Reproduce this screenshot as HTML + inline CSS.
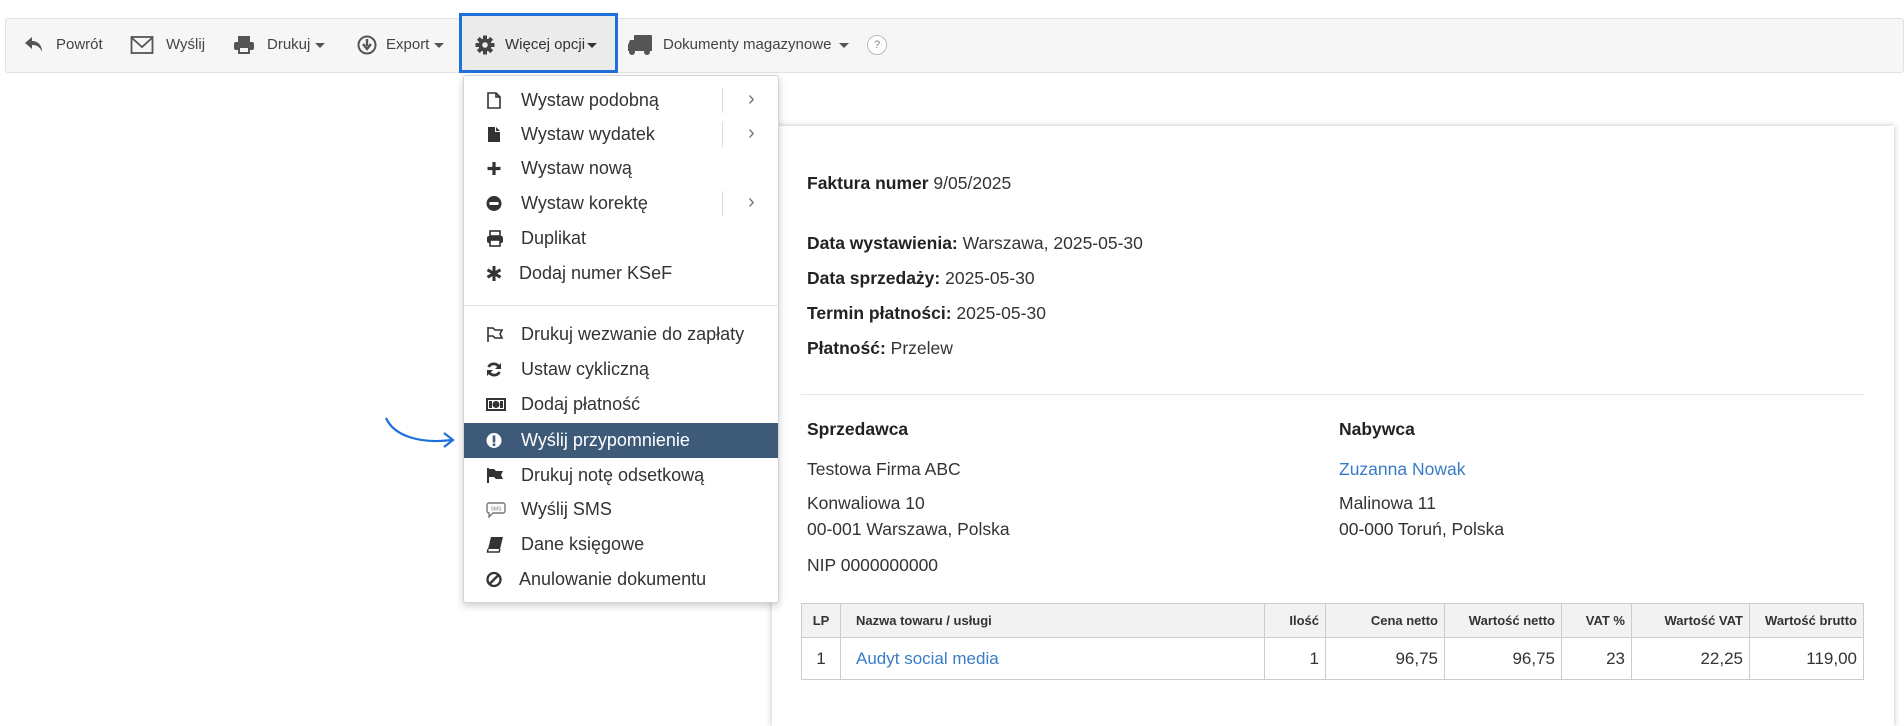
<!DOCTYPE html>
<html><head><meta charset="utf-8"><style>
*{margin:0;padding:0;box-sizing:border-box}
body{width:1904px;height:677px;overflow:hidden;background:#fff;font-family:"Liberation Sans",Arial,sans-serif;color:#333;position:relative}
.a{position:absolute;white-space:nowrap}
.tb{position:absolute;left:5px;top:18px;width:1899px;height:55px;background:#f6f6f6;border:1px solid #e2e2e2;border-radius:3px}
.tt{position:absolute;top:36px;font-size:15px;color:#444;line-height:18px}
.car{display:inline-block;width:0;height:0;border-left:5px solid transparent;border-right:5px solid transparent;border-top:5px solid #555;vertical-align:middle;margin-left:5px}
.menu{position:absolute;z-index:5;left:463px;top:75px;width:316px;height:528px;background:#fff;border:1px solid #d5d5d5;border-radius:3px;box-shadow:0 3px 8px rgba(0,0,0,.2)}
.mi{position:absolute;left:0;width:314px;height:35px;font-size:18px;color:#333;line-height:35px}
.mi span{position:absolute;left:57px}
.mi svg{position:absolute;left:22px;top:9px}
.vs{position:absolute;left:258px;top:5px;width:1px;height:25px;background:#ddd}
.chev{position:absolute;left:284px;top:-1px;color:#777;font-size:20px}
.hl{background:#3d5a78;color:#fff}
.panel{position:absolute;left:772px;top:126px;width:1122px;height:600px;background:#fff;box-shadow:0 0 6px rgba(0,0,0,.25)}
.t{font-size:17.5px;color:#333}
b{font-weight:bold;color:#222}
table{position:absolute;left:801px;top:603px;border-collapse:collapse;width:1063px}
td,th{border:1px solid #ccc;padding:0 6px}
th{background:#f2f2f2;font-size:13px;height:34px;text-align:right;color:#333}
td{height:42px;font-size:17px;text-align:right}
</style></head><body>
<div class="tb"></div>
<div style="position:absolute;left:459px;top:13px;width:159px;height:60px;border:3px solid #1f6fdc;background:#ebebeb"></div>

<svg class="a" style="left:24px;top:36px" width="20" height="18" viewBox="0 0 20 18"><path d="M8 1 L1 7 L8 13 V9 C13 9 16 11 18 16 C18 9 14 5 8 5 Z" fill="#555"/></svg>
<div class="tt" style="left:56px">Powrót</div>
<svg class="a" style="left:130px;top:35px" width="24" height="20" viewBox="0 0 24 20"><rect x="1.5" y="2" width="21" height="16" fill="none" stroke="#555" stroke-width="1.8"/><path d="M2 3 L12 12 L22 3" fill="none" stroke="#555" stroke-width="1.8"/></svg>
<div class="tt" style="left:166px">Wyślij</div>
<svg class="a" style="left:233px;top:35px" width="22" height="20" viewBox="0 0 22 20"><rect x="5" y="1" width="12" height="6" fill="#555"/><rect x="1" y="7" width="20" height="8" rx="2" fill="#555"/><rect x="5" y="12" width="12" height="7" fill="#555"/><rect x="7" y="13" width="8" height="4" fill="#f6f6f6"/></svg>
<div class="tt" style="left:267px">Drukuj<span class="car"></span></div>
<svg class="a" style="left:357px;top:35px" width="20" height="20" viewBox="0 0 20 20"><circle cx="10" cy="10" r="8.5" fill="none" stroke="#555" stroke-width="2"/><path d="M10 4 V11 M6 9 L10 14 L14 9" stroke="#555" stroke-width="2.4" fill="none"/></svg>
<div class="tt" style="left:386px">Export<span class="car"></span></div>
<svg class="a" style="left:475px;top:35px" width="20" height="20" viewBox="0 0 20 20"><g fill="#444"><circle cx="10" cy="10" r="6.5"/><rect x="8" y="0.5" width="4" height="19"/><rect x="0.5" y="8" width="19" height="4"/><rect x="8" y="0.5" width="4" height="19" transform="rotate(45 10 10)"/><rect x="8" y="0.5" width="4" height="19" transform="rotate(-45 10 10)"/></g><circle cx="10" cy="10" r="2.8" fill="#ebebeb"/></svg>
<div class="tt" style="left:505px;color:#333">Więcej opcji<span class="car" style="margin-left:2px;border-top-color:#333"></span></div>
<svg class="a" style="left:627px;top:34px" width="26" height="22" viewBox="0 0 26 22"><rect x="7" y="1" width="18" height="14" rx="1" fill="#555"/><path d="M1 11 L3 6 H7 V17 H1Z" fill="#555"/><rect x="1" y="14" width="24" height="3" fill="#555"/><circle cx="5" cy="18" r="3" fill="#555"/><circle cx="20" cy="18" r="3" fill="#555"/></svg>
<div class="tt" style="left:663px">Dokumenty magazynowe<span class="car" style="margin-left:8px"></span></div>
<div class="a" style="left:867px;top:35px;width:20px;height:20px;border:1px solid #bbb;border-radius:50%;background:#fff;font-size:11px;color:#888;text-align:center;line-height:18px">?</div>

<div class="panel"></div>
<div class="a t" style="left:807px;top:173px"><b>Faktura numer</b> 9/05/2025</div>
<div class="a t" style="left:807px;top:233px"><b>Data wystawienia:</b> Warszawa, 2025-05-30</div>
<div class="a t" style="left:807px;top:268px"><b>Data sprzedaży:</b> 2025-05-30</div>
<div class="a t" style="left:807px;top:303px"><b>Termin płatności:</b> 2025-05-30</div>
<div class="a t" style="left:807px;top:338px"><b>Płatność:</b> Przelew</div>
<div class="a" style="left:801px;top:394px;width:1063px;height:1px;background:#e6e6e6"></div>
<div class="a t" style="left:807px;top:419px"><b>Sprzedawca</b></div>
<div class="a t" style="left:1339px;top:419px"><b>Nabywca</b></div>
<div class="a t" style="left:807px;top:459px">Testowa Firma ABC</div>
<div class="a t" style="left:1339px;top:459px;color:#3a7bc8">Zuzanna Nowak</div>
<div class="a t" style="left:807px;top:493px">Konwaliowa 10</div>
<div class="a t" style="left:807px;top:519px">00-001 Warszawa, Polska</div>
<div class="a t" style="left:1339px;top:493px">Malinowa 11</div>
<div class="a t" style="left:1339px;top:519px">00-000 Toruń, Polska</div>
<div class="a t" style="left:807px;top:555px">NIP 0000000000</div>
<table>
<tr><th style="width:39px;text-align:center">LP</th><th style="width:424px;text-align:left;padding-left:15px">Nazwa towaru / usługi</th><th style="width:61px">Ilość</th><th style="width:119px">Cena netto</th><th style="width:117px">Wartość netto</th><th style="width:70px">VAT %</th><th style="width:118px">Wartość VAT</th><th>Wartość brutto</th></tr>
<tr><td style="text-align:center">1</td><td style="text-align:left;padding-left:15px;color:#3a7bc8">Audyt social media</td><td>1</td><td>96,75</td><td>96,75</td><td>23</td><td>22,25</td><td>119,00</td></tr>
</table>

<div class="menu">
 <div class="mi" style="top:7px"><svg width="16" height="17" viewBox="0 0 16 17"><path d="M2 1 H10 L14 5 V16 H2 Z M10 1 V5 H14" fill="none" stroke="#333" stroke-width="1.6"/></svg><span>Wystaw podobną</span><div class="vs"></div><div class="chev">›</div></div>
 <div class="mi" style="top:41px"><svg width="16" height="17" viewBox="0 0 16 17"><path d="M2 1 H9 V6 H14 V16 H2 Z M10 1 L14 5 H10Z" fill="#333"/></svg><span>Wystaw wydatek</span><div class="vs"></div><div class="chev">›</div></div>
 <div class="mi" style="top:75px"><svg width="16" height="17" viewBox="0 0 16 17"><path d="M8 2 V15 M1.5 8.5 H14.5" stroke="#333" stroke-width="3.2"/></svg><span>Wystaw nową</span></div>
 <div class="mi" style="top:110px"><svg width="16" height="17" viewBox="0 0 16 17"><circle cx="8" cy="8.5" r="7.5" fill="#333"/><rect x="3.5" y="7" width="9" height="3" fill="#fff"/></svg><span>Wystaw korektę</span><div class="vs"></div><div class="chev">›</div></div>
 <div class="mi" style="top:145px"><svg width="18" height="17" viewBox="0 0 18 17"><rect x="4" y="1" width="10" height="5" fill="none" stroke="#333" stroke-width="1.6"/><rect x="1" y="6" width="16" height="7" rx="2" fill="#333"/><rect x="4" y="10" width="10" height="6" fill="#fff" stroke="#333" stroke-width="1.6"/></svg><span>Duplikat</span></div>
 <div class="mi" style="top:180px"><svg width="16" height="17" viewBox="0 0 16 17"><path d="M8 1 V16 M1.5 4.8 L14.5 12.2 M14.5 4.8 L1.5 12.2" stroke="#333" stroke-width="3"/></svg><span style="left:55px">Dodaj numer KSeF</span></div>
 <div style="position:absolute;left:0;top:229px;width:314px;height:1px;background:#e3e3e3"></div>
 <div class="mi" style="top:241px"><svg width="18" height="17" viewBox="0 0 18 17"><path d="M2 1 V16 M2 2 H7 L9 4 H16 L14 8 L16 12 H9 L7 10 H2" fill="none" stroke="#333" stroke-width="1.6"/></svg><span>Drukuj wezwanie do zapłaty</span></div>
 <div class="mi" style="top:276px"><svg width="16" height="17" viewBox="0 0 16 17"><path d="M13 6 A6 6 0 0 0 2.5 6 M3 11 A6 6 0 0 0 13.5 11" fill="none" stroke="#333" stroke-width="2.8"/><path d="M15 2 V8 H9Z M1 15 V9 H7Z" fill="#333"/></svg><span>Ustaw cykliczną</span></div>
 <div class="mi" style="top:311px"><svg width="20" height="17" viewBox="0 0 20 17"><rect x="1" y="3" width="18" height="11" fill="none" stroke="#333" stroke-width="2"/><circle cx="10" cy="8.5" r="3.5" fill="#333"/><rect x="3" y="5" width="3" height="7" fill="#333"/><rect x="14" y="5" width="3" height="7" fill="#333"/></svg><span>Dodaj płatność</span></div>
 <div class="mi hl" style="top:347px"><svg width="16" height="17" viewBox="0 0 16 17"><circle cx="8" cy="8.5" r="7.5" fill="#fff"/><rect x="6.7" y="3.5" width="2.6" height="7" fill="#3d5a78"/><rect x="6.7" y="11.5" width="2.6" height="2.5" fill="#3d5a78"/></svg><span>Wyślij przypomnienie</span></div>
 <div class="mi" style="top:382px"><svg width="18" height="17" viewBox="0 0 18 17"><path d="M2 1 V16" stroke="#333" stroke-width="2"/><path d="M3 2 H8 L10 4 H17 L15 8 L17 12 H10 L8 10 H3Z" fill="#333"/></svg><span>Drukuj notę odsetkową</span></div>
 <div class="mi" style="top:416px"><svg width="20" height="17" viewBox="0 0 20 17"><path d="M3 2 H17 A2 2 0 0 1 19 4 V10 A2 2 0 0 1 17 12 H7 L3 16 V12 A2 2 0 0 1 1 10 V4 A2 2 0 0 1 3 2Z" fill="none" stroke="#777" stroke-width="1.4"/><text x="10" y="9.5" font-size="5" text-anchor="middle" fill="#777" font-family="Liberation Sans">SMS</text></svg><span>Wyślij SMS</span></div>
 <div class="mi" style="top:451px"><svg width="18" height="17" viewBox="0 0 18 17"><path d="M5 1 H17 L14 13 H2Z" fill="#333"/><path d="M2 13 L1.5 16 H13 L14 13" fill="none" stroke="#333" stroke-width="1.5"/></svg><span>Dane księgowe</span></div>
 <div class="mi" style="top:486px"><svg width="16" height="17" viewBox="0 0 16 17"><circle cx="8" cy="8.5" r="6.5" fill="none" stroke="#333" stroke-width="2.3"/><path d="M3.5 13 L12.5 4" stroke="#333" stroke-width="2.3"/></svg><span style="left:55px">Anulowanie dokumentu</span></div>
</div>

<svg class="a" style="left:380px;top:410px;z-index:6" width="84" height="42" viewBox="0 0 84 42"><path d="M6 8 C14 26 40 34 72 30" fill="none" stroke="#1f6fdc" stroke-width="2.2"/><path d="M64 23 L73 30 L64 37" fill="none" stroke="#1f6fdc" stroke-width="2.2"/></svg>
</body></html>
